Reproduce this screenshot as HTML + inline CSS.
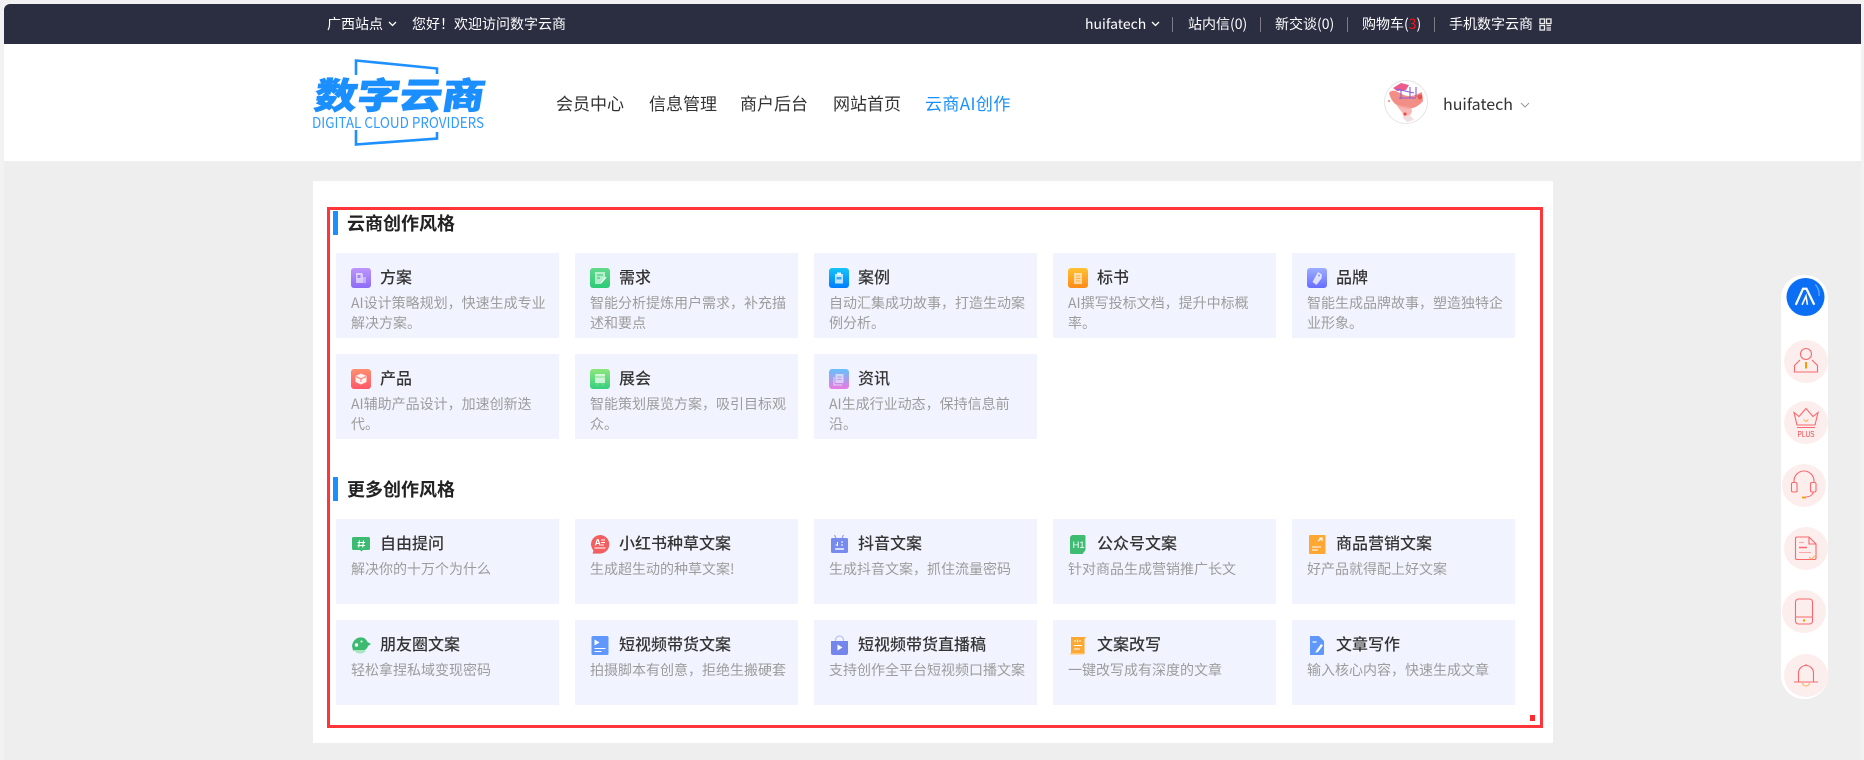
<!DOCTYPE html>
<html lang="zh-CN"><head><meta charset="utf-8"><title>数字云商</title>
<style>
*{margin:0;padding:0;box-sizing:border-box}
html,body{width:1864px;height:760px;overflow:hidden;background:#f2f2f2}
body{position:relative;font-family:"Noto Sans CJK SC","Liberation Sans",sans-serif}
.a{position:absolute;white-space:nowrap}
#main{left:4px;top:161px;width:1857px;height:599px;background:#eee}
#top{left:4px;top:4px;width:1857px;height:40px;background:#2b2e41;border-radius:6px 0 0 0}
#head{left:4px;top:44px;width:1857px;height:117px;background:#fff}
.t{font-size:14px;line-height:20px;top:14px;color:#fff}
.sep{top:17px;width:1px;height:15px;background:#7b7c86}
.n{font-size:17px;line-height:24px;top:91px;color:#333}
#panel{left:313px;top:181px;width:1240px;height:562px;background:#fff}
#red{left:327px;top:207px;width:1216px;height:521px;border:3px solid #ff3639}
.bar{left:333px;width:5px;height:24px;background:#1890ff}
.h{left:347px;font-size:18px;line-height:24px;font-weight:700;color:#222}
.c{position:absolute;width:223px;height:85px;background:#f1f4fe}
.c svg{position:absolute;left:15px;top:15px;width:20px;height:20px}
.c b{position:absolute;left:44px;top:11px;font-size:16px;line-height:24px;font-weight:500;color:#333;white-space:nowrap}
.c p{position:absolute;left:15px;top:40px;font-size:14px;line-height:20px;color:#9c9c9c;white-space:nowrap}
#side{left:1781px;top:275px;width:47px;height:424px;background:#fff;border-radius:23px}
.o{position:absolute;width:44px;height:43px;border-radius:50%;background:#fdeeee}
.o svg{position:absolute;left:0;top:0;width:44px;height:43px;fill:none;stroke:#f8686c;stroke-width:1.1}
</style></head><body>
<div class="a" id="main"></div>
<div class="a" id="top"></div>
<div class="a" id="head"></div>

<div class="a t" style="left:327px">广西站点</div>
<svg class="a" style="left:388px;top:21px;z-index:2" width="9" height="6" fill="none" stroke="#fff" stroke-width="1.300"><path d="M1 1l3.500 3.500L8 1"/></svg>
<div class="a t" style="left:412px">您好！欢迎访问数字云商</div>
<div class="a t" style="left:1085px">huifatech</div>
<svg class="a" style="left:1151px;top:21px" width="9" height="6" fill="none" stroke="#fff" stroke-width="1.300"><path d="M1 1l3.500 3.500L8 1"/></svg>
<div class="a sep" style="left:1172px"></div>
<div class="a t" style="left:1188px">站内信(0)</div>
<div class="a sep" style="left:1260px"></div>
<div class="a t" style="left:1275px">新交谈(0)</div>
<div class="a sep" style="left:1347px"></div>
<div class="a t" style="left:1362px">购物车(<span style="color:#f11">3</span>)</div>
<div class="a sep" style="left:1434px"></div>
<div class="a t" style="left:1449px">手机数字云商</div>
<svg class="a" style="left:1539px;top:18px" width="13" height="13" fill="none" stroke="#eee" stroke-width="1.300"><rect x="1" y="1" width="4.500" height="4.500"/><rect x="7.500" y="1" width="4.500" height="4.500"/><rect x="1" y="7.500" width="4.500" height="4.500"/><path d="M7.500 7.500h4.500M7.500 10h4.500M7.500 12h4.500"/></svg>

<svg class="a" style="left:310px;top:55px" width="180" height="95" viewBox="310 55 180 95">
<path d="M356 75V60.500L437 68.500V74M356 130V144.500L437 138.500V132" fill="none" stroke="#1e90ff" stroke-width="2.600"/>
<g transform="translate(313 108.500) skewX(-9)"><text x="0" y="0" font-family="Noto Sans CJK SC" font-weight="900" font-size="36" fill="#1b8fff" stroke="#1b8fff" stroke-width=".7" textLength="170" lengthAdjust="spacingAndGlyphs">数字云商</text></g>
<text x="312" y="128" font-family="Noto Sans CJK SC" font-size="15" fill="#2f9aff" textLength="172" lengthAdjust="spacingAndGlyphs">DIGITAL CLOUD PROVIDERS</text>
</svg>

<div class="a n" style="left:556px">会员中心</div>
<div class="a n" style="left:649px">信息管理</div>
<div class="a n" style="left:740px">商户后台</div>
<div class="a n" style="left:833px">网站首页</div>
<div class="a n" style="left:925px;color:#1890ff;letter-spacing:.4px">云商AI创作</div>

<svg class="a" style="left:1384px;top:80px" width="44" height="44" viewBox="0 0 44 44">
<circle cx="22" cy="22" r="21.500" fill="#fff" stroke="#e5e5e5"/>
<path d="M5 13C9 8 13 12 20 15C28 18 33 14 38 12L39 21C34 27 27 30 21 28C12 27 7 21 5 13Z" fill="#ef7a70" fill-opacity=".85"/>
<path d="M12 24C19 27 28 25 28 31C27 36 22 38 20 37C19 32 15 30 12 24Z" fill="#f6a5a0" fill-opacity=".8"/>
<path d="M9 8L17 3L25 5L22 10L13 11Z" fill="#ee5c8c"/>
<path d="M12 9L30 13M15 18L32 18M17 9V19M26 7V18M32 7V17" stroke="#8a5cd8" stroke-width="1.100" fill="none"/>
<path d="M18 37L26 35L30 40L23 42Z" fill="#f0dfe2"/><circle cx="5" cy="21" r="1" fill="#ef7a70"/><circle cx="21" cy="34" r="1.500" fill="#e44"/><circle cx="36" cy="17" r="2.500" fill="#e8554c"/>
</svg>
<div class="a" style="left:1443px;top:91px;font-size:16px;line-height:24px;color:#333">huifatech</div>
<svg class="a" style="left:1520px;top:102px" width="10" height="6" fill="none" stroke="#999" stroke-width="1"><path d="M1 1l4 4 4-4"/></svg>

<div class="a" id="panel"></div>
<div class="a" id="red"></div>
<div class="a" style="left:1530px;top:715px;width:5px;height:6px;background:#ff2a2e"></div>

<div class="a bar" style="top:211px"></div>
<div class="a h" style="top:211px">云商创作风格</div>
<div class="a bar" style="top:477px"></div>
<div class="a h" style="top:477px">更多创作风格</div>

<svg width="0" height="0" style="position:absolute"><defs>
<linearGradient id="g1" x1="0" y1="0" x2="0" y2="1"><stop offset="0" stop-color="#bd95fb"/><stop offset="1" stop-color="#8b6cf5"/></linearGradient>
<linearGradient id="g2" x1="0" y1="0" x2="0" y2="1"><stop offset="0" stop-color="#62d98d"/><stop offset="1" stop-color="#2ccb76"/></linearGradient>
<linearGradient id="g3" x1="0" y1="0" x2="0" y2="1"><stop offset="0" stop-color="#16c4f8"/><stop offset="1" stop-color="#007cff"/></linearGradient>
<linearGradient id="g4" x1="0" y1="0" x2="0" y2="1"><stop offset="0" stop-color="#ffc233"/><stop offset="1" stop-color="#ff8a15"/></linearGradient>
<linearGradient id="g5" x1="0" y1="0" x2="0" y2="1"><stop offset="0" stop-color="#9cadff"/><stop offset="1" stop-color="#676dff"/></linearGradient>
<linearGradient id="g6" x1="0" y1="0" x2="0" y2="1"><stop offset="0" stop-color="#ff8f70"/><stop offset="1" stop-color="#ff5768"/></linearGradient>
<linearGradient id="g7" x1="0" y1="0" x2="0" y2="1"><stop offset="0" stop-color="#8ee67c"/><stop offset="1" stop-color="#35cf80"/></linearGradient>
<linearGradient id="g8" x1="0" y1="0" x2="0" y2="1"><stop offset="0" stop-color="#66c2fb"/><stop offset="1" stop-color="#ea7be0"/></linearGradient>
</defs></svg>

<div class="c" style="left:336px;top:253px"><svg viewBox="0 0 20 20"><rect width="20" height="20" rx="3" fill="url(#g1)"/><path d="M5 5h6l1 1v9H5z" fill="#fff" fill-opacity=".6"/><path d="M12 9h3v6h-3z" fill="#fff" fill-opacity=".4"/><rect x="6.500" y="7" width="3" height="3" fill="#a583f5"/></svg><b>方案</b><p>AI设计策略规划，快速生成专业<br>解决方案。</p></div>
<div class="c" style="left:575px;top:253px"><svg viewBox="0 0 20 20"><rect width="20" height="20" rx="3" fill="url(#g2)"/><path d="M5 4h10v6l-4 6H5z" fill="#fff" fill-opacity=".6"/><path d="M7 7h6M7 10h3" stroke="#3fd07f" stroke-width="1.200"/><path d="M11 15l5-6" stroke="#fff" stroke-width="1.300"/></svg><b>需求</b><p>智能分析提炼用户需求，补充描<br>述和要点</p></div>
<div class="c" style="left:814px;top:253px"><svg viewBox="0 0 20 20"><rect width="20" height="20" rx="3" fill="url(#g3)"/><path d="M6 6h8v9.500H6z" fill="#fff" fill-opacity=".75"/><rect x="8" y="4.500" width="4" height="2.500" fill="#fff" fill-opacity=".9"/><rect x="7.500" y="9" width="5" height="2.500" fill="#3aa6f8"/></svg><b>案例</b><p>自动汇集成功故事，打造生动案<br>例分析。</p></div>
<div class="c" style="left:1053px;top:253px"><svg viewBox="0 0 20 20"><rect width="20" height="20" rx="3" fill="url(#g4)"/><path d="M6 5h8v11H6z" fill="#fff" fill-opacity=".6"/><path d="M8 8h4M8 10.500h4M8 13h4" stroke="#ffae3b" stroke-width="1"/></svg><b>标书</b><p>AI撰写投标文档，提升中标概<br>率。</p></div>
<div class="c" style="left:1292px;top:253px"><svg viewBox="0 0 20 20"><rect width="20" height="20" rx="3" fill="url(#g5)"/><path d="M11 4l4 2.500-.5 4-5 6.500-4-3z" fill="#fff" fill-opacity=".75"/><circle cx="12" cy="7.500" r="1" fill="#8794ff"/></svg><b>品牌</b><p>智能生成品牌故事，塑造独特企<br>业形象。</p></div>

<div class="c" style="left:336px;top:354px"><svg viewBox="0 0 20 20"><rect width="20" height="20" rx="3" fill="url(#g6)"/><path d="M10 4.500l5.500 2.500v6L10 15.500 4.500 13V7z" fill="#fff" fill-opacity=".9"/><path d="M5 7.500l5 2.500 5-2.500M10 10v3" stroke="#ff7a6c" stroke-width="1" fill="none"/></svg><b>产品</b><p>AI辅助产品设计，加速创新迭<br>代。</p></div>
<div class="c" style="left:575px;top:354px"><svg viewBox="0 0 20 20"><rect width="20" height="20" rx="3" fill="url(#g7)"/><path d="M5 5h10v9H5z" fill="#fff" fill-opacity=".7"/><path d="M5 8h10M8 14l-1 2.500M12 14l1 2.500" stroke="#7fe08e" stroke-width="1"/></svg><b>展会</b><p>智能策划展览方案，吸引目标观<br>众。</p></div>
<div class="c" style="left:814px;top:354px"><svg viewBox="0 0 20 20"><rect width="20" height="20" rx="3" fill="url(#g8)"/><path d="M6.500 5h8v9h-8z" fill="#fff" fill-opacity=".55"/><path d="M5 8v8h8" fill="none" stroke="#fff" stroke-opacity=".6"/><path d="M8.500 8h4M8.500 10.500h4" stroke="#b99ae8" stroke-width="1"/></svg><b>资讯</b><p>AI生成行业动态，保持信息前<br>沿。</p></div>

<div class="c" style="left:336px;top:519px"><svg viewBox="0 0 20 20"><path d="M1 4.500A1.500 1.500 0 0 1 2.500 3h15A1.500 1.500 0 0 1 19 4.500v10a1.500 1.500 0 0 1-1.500 1.500H12l-1.500 1.500L9 16H2.500A1.500 1.500 0 0 1 1 14.500z" fill="#3dbb73"/><path d="M8.500 6.500l-.8 7M12.500 6.500l-.8 7M6.500 8.500h7.500M6.500 11.500h7.500" stroke="#fff" stroke-width="1.100"/></svg><b>自由提问</b><p>解决你的十万个为什么</p></div>
<div class="c" style="left:575px;top:519px"><svg viewBox="0 0 20 20"><path d="M10 1a9.300 9.300 0 1 1 0 18.600H2.500l1-3A9.300 9.300 0 0 1 10 1z" fill="#f25f60"/><text x="4.500" y="11.500" font-family="Liberation Sans" font-size="9" font-weight="700" fill="#fff">A</text><path d="M11 6h4M11 8.500h4M11 11h3M4.500 14h11" stroke="#fff" stroke-width="1"/></svg><b>小红书种草文案</b><p>生成超生动的种草文案!</p></div>
<div class="c" style="left:814px;top:519px"><svg viewBox="0 0 20 20"><path d="M7 4L5.500 1M13 4l1.500-3" stroke="#8c9cf0" stroke-width="1.100"/><rect x="2" y="4" width="17" height="15" rx="1.500" fill="#778bee"/><path d="M6 15h9" stroke="#fff" stroke-width="1.400"/><path d="M8.500 8v4M6.500 11h2M12 8h2M12 11h2" stroke="#fff" stroke-width="1"/></svg><b>抖音文案</b><p>生成抖音文案，抓住流量密码</p></div>
<div class="c" style="left:1053px;top:519px"><svg viewBox="0 0 20 20"><path d="M4 1h12a1.500 1.500 0 0 1 1.500 1.500V16l-3 4H3.500A1.500 1.500 0 0 1 2 18.500V3z" fill="#3fbc72"/><text x="4.500" y="14" font-family="Liberation Sans" font-size="9.500" fill="#fff">H1</text></svg><b>公众号文案</b><p>针对商品生成营销推广长文</p></div>
<div class="c" style="left:1292px;top:519px"><svg viewBox="0 0 20 20"><rect x="2" y="1" width="16.500" height="19" rx="1" fill="#ffa733"/><path d="M11 7l4-3M12 4h3v3M5 13h9M5 16h6" stroke="#fff" stroke-width="1.100" fill="none"/></svg><b>商品营销文案</b><p>好产品就得配上好文案</p></div>

<div class="c" style="left:336px;top:620px"><svg viewBox="0 0 20 20"><path d="M1 11C2 4 8 1 13 3c2 1 3 3 3.500 4L20 9l-3 2c-1 3-3 4.500-6 4.500H2z" fill="#3cbb70"/><path d="M3 15c2 4 8 5 12 1l-2-1z" fill="#a8e4c0"/><circle cx="5.500" cy="10" r="1.700" fill="#fff"/><circle cx="10.500" cy="6.500" r="1" fill="#fff"/></svg><b>朋友圈文案</b><p>轻松拿捏私域变现密码</p></div>
<div class="c" style="left:575px;top:620px"><svg viewBox="0 0 20 20"><rect x="1.500" y="1" width="17" height="19" rx="1.500" fill="#5f97fa"/><path d="M4.500 4.500l5 3-5 3z" fill="#fff"/><path d="M4.500 13.500h11M4.500 16.500h7" stroke="#fff" stroke-width="1.100"/></svg><b>短视频带货文案</b><p>拍摄脚本有创意，拒绝生搬硬套</p></div>
<div class="c" style="left:814px;top:620px"><svg viewBox="0 0 20 20"><path d="M6.500 6V5a4 4 0 0 1 8 0v1" fill="none" stroke="#b9c4f5" stroke-width="1.300"/><path d="M2 6h17v12a2 2 0 0 1-2 2H4a2 2 0 0 1-2-2z" fill="#7486ec"/><path d="M8.500 9.500l5 3-5 3z" fill="#fff"/></svg><b>短视频带货直播稿</b><p>支持创作全平台短视频口播文案</p></div>
<div class="c" style="left:1053px;top:620px"><svg viewBox="0 0 20 20"><path d="M3 2h15l-1.500 2v15H3z" fill="#ffa733"/><path d="M2 19h13" stroke="#ffd08a" stroke-width="1.500"/><path d="M6 6h2M11 6h2M9.500 4.500v3M6 10.500h8M6 14h6" stroke="#fff" stroke-width="1.100"/></svg><b>文案改写</b><p>一键改写成有深度的文章</p></div>
<div class="c" style="left:1292px;top:620px"><svg viewBox="0 0 20 20"><path d="M3 1h9l5 5v12.500a1.500 1.500 0 0 1-1.500 1.500H3z" fill="#5f97fa"/><path d="M5.500 7h4" stroke="#fff" stroke-width="1.200"/><path d="M9 16l5-7 2 1.500-5 6.500-2.500.7z" fill="#fff"/></svg><b>文章写作</b><p>输入核心内容，快速生成文章</p></div>

<div class="a" id="side"></div>
<svg class="a" style="left:1786px;top:277px" width="39" height="40" viewBox="0 0 40 40">
<circle cx="20" cy="20" r="19.500" fill="#0a6ff5"/><path d="M30 7a16 16 0 0 1 4 12" stroke="#5da3ff" stroke-width="1.500" fill="none"/>
<path d="M10 28L17.500 11.500H21L29 28" stroke="#fff" stroke-width="2.300" fill="none"/><path d="M16.500 28L20.500 19L22 28" stroke="#fff" stroke-width="1.600" fill="none"/>
</svg>

<div class="o" style="left:1784px;top:340px"><svg viewBox="0 0 44 43"><circle cx="22" cy="14" r="5.500"/><path d="M16 20l-5.500 5.500V32h23v-6.500L28 20"/><path d="M22 22v6.500" stroke="#f90" stroke-width="2"/></svg></div>
<div class="o" style="left:1784px;top:401px"><svg viewBox="0 0 44 43"><path d="M10 11.500L15 15.500L22 7.500L29 15.500L34 11.500L31 24H13z"/><path d="M13 26.500h18"/><path d="M19.500 18.500l2.500 2 2.500-2" stroke="#fab25a"/><text x="22" y="36" text-anchor="middle" font-family="Liberation Sans" font-size="8" fill="#f8484c" stroke="none" textLength="17" lengthAdjust="spacingAndGlyphs">PLUS</text></svg></div>
<div class="o" style="left:1782px;top:464px"><svg viewBox="0 0 44 43"><path d="M12 19v-2a10 10 0 0 1 20 0v2"/><rect x="9.500" y="18.500" width="5.500" height="9.500" rx="1.500"/><rect x="28.500" y="18.500" width="5.500" height="9.500" rx="1.500"/><path d="M31.500 28c-1 3-4 5-8 5"/><path d="M20 33.500h4" stroke="#f90" stroke-width="1.800"/></svg></div>
<div class="o" style="left:1784px;top:527px"><svg viewBox="0 0 44 43"><path d="M13 10h12l7 7v14a1.500 1.500 0 0 1-1.500 1.500H13a1.500 1.500 0 0 1-1.500-1.500V11.500A1.500 1.500 0 0 1 13 10z"/><path d="M25 10v7h7"/><path d="M15 15.500h5" stroke="#f9a7a7"/><path d="M15 20.500h8" stroke-width="1.500"/><path d="M15 25.500h12" stroke="#f9a7a7"/><path d="M25 30l2.500 2 4.500-4" stroke="#fbb45c"/></svg></div>
<div class="o" style="left:1782px;top:590px"><svg viewBox="0 0 44 43"><rect x="13.500" y="9" width="17" height="25" rx="3"/><path d="M13.500 27h17"/><circle cx="22" cy="30.500" r="1.200" fill="#f90" stroke="none"/></svg></div>
<div class="o" style="left:1784px;top:654px"><svg viewBox="0 0 44 43"><path d="M14.500 28V19a7.500 7.500 0 0 1 15 0v9"/><path d="M10 28h24"/><path d="M22 11v-1"/><path d="M18.500 29c.5 4 6.500 4 7 0" stroke="#fbb45c"/></svg></div>
</body></html>
